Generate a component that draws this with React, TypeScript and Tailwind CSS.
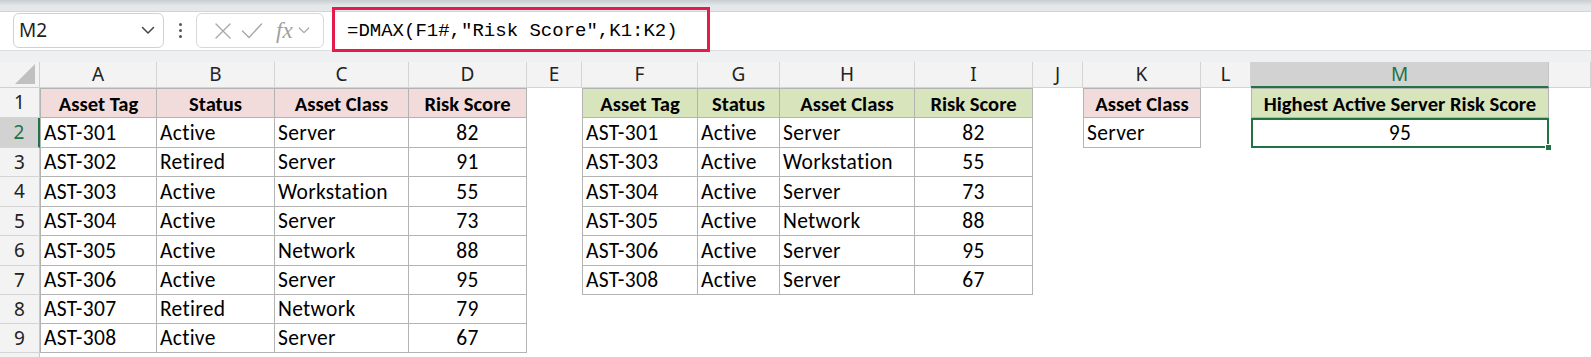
import React from "react";

const COLS = [
  { k: "A", w: 117 },
  { k: "B", w: 118 },
  { k: "C", w: 134 },
  { k: "D", w: 118 },
  { k: "E", w: 55 },
  { k: "F", w: 116 },
  { k: "G", w: 82 },
  { k: "H", w: 135 },
  { k: "I", w: 118 },
  { k: "J", w: 50 },
  { k: "K", w: 118 },
  { k: "L", w: 50 },
  { k: "M", w: 298 },
  { k: "", w: 42 },
];

const ROW_H = [30, 30, 29, 30, 29, 30, 29, 29, 29, 29];

type Cell = { t: string; kind: "pink" | "green" | "body" | "num" | "sel" } | null;

const P = (t: string): Cell => ({ t, kind: "pink" });
const G = (t: string): Cell => ({ t, kind: "green" });
const B = (t: string): Cell => ({ t, kind: "body" });
const N = (t: string): Cell => ({ t, kind: "num" });

const left: Cell[][] = [
  [P("Asset Tag"), P("Status"), P("Asset Class"), P("Risk Score")],
  [B("AST-301"), B("Active"), B("Server"), N("82")],
  [B("AST-302"), B("Retired"), B("Server"), N("91")],
  [B("AST-303"), B("Active"), B("Workstation"), N("55")],
  [B("AST-304"), B("Active"), B("Server"), N("73")],
  [B("AST-305"), B("Active"), B("Network"), N("88")],
  [B("AST-306"), B("Active"), B("Server"), N("95")],
  [B("AST-307"), B("Retired"), B("Network"), N("79")],
  [B("AST-308"), B("Active"), B("Server"), N("67")],
];

const mid: Cell[][] = [
  [G("Asset Tag"), G("Status"), G("Asset Class"), G("Risk Score")],
  [B("AST-301"), B("Active"), B("Server"), N("82")],
  [B("AST-303"), B("Active"), B("Workstation"), N("55")],
  [B("AST-304"), B("Active"), B("Server"), N("73")],
  [B("AST-305"), B("Active"), B("Network"), N("88")],
  [B("AST-306"), B("Active"), B("Server"), N("95")],
  [B("AST-308"), B("Active"), B("Server"), N("67")],
];

function buildGrid(): { cell: Cell; top: boolean; leftEdge: boolean }[][] {
  const rows: { cell: Cell; top: boolean; leftEdge: boolean }[][] = [];
  for (let r = 0; r < 10; r++) {
    const row: { cell: Cell; top: boolean; leftEdge: boolean }[] = [];
    for (let c = 0; c < 14; c++) {
      let cell: Cell = null;
      let leftEdge = false;
      if (c <= 3 && r < left.length) {
        cell = left[r][c];
        leftEdge = c === 0;
      } else if (c >= 5 && c <= 8 && r < mid.length) {
        cell = mid[r][c - 5];
        leftEdge = c === 5;
      } else if (c === 10 && r < 2) {
        cell = r === 0 ? P("Asset Class") : B("Server");
        leftEdge = true;
      } else if (c === 12 && r < 2) {
        cell = r === 0 ? G("Highest Active Server Risk Score") : { t: "95", kind: "sel" };
        leftEdge = true;
      }
      row.push({ cell, top: r === 0, leftEdge });
    }
    rows.push(row);
  }
  return rows;
}

const font = { fontFamily: "Carlito, Calibri, Lato, sans-serif" };

function CellView({ cell, top, leftEdge }: { cell: Cell; top: boolean; leftEdge: boolean }) {
  if (!cell) return <div className="bg-white" />;
  if (cell.kind === "sel") {
    return (
      <div className="relative bg-white border-2 border-[#217346] flex items-center justify-center text-[21.5px] tracking-[0.3px] text-black leading-none">
        <span className="pt-[2px]">{cell.t}</span>
        <div className="absolute right-[-5px] bottom-[-5px] w-[7px] h-[7px] bg-[#217346] border border-white" />
      </div>
    );
  }
  const borders = `border-r border-b border-[#b3b3b3] ${top ? "border-t" : ""} ${leftEdge ? "border-l" : ""}`;
  if (cell.kind === "pink" || cell.kind === "green") {
    return (
      <div
        className={`${borders} ${cell.kind === "pink" ? "bg-[#f2dcdb]" : "bg-[#d8e4bc]"} flex items-center justify-center text-[20.6px] font-bold text-black leading-none whitespace-nowrap`}
      >
        <span className="pt-[2px]">{cell.t}</span>
      </div>
    );
  }
  if (cell.kind === "num") {
    return (
      <div className={`${borders} bg-white flex items-center justify-center text-[21.5px] tracking-[0.3px] text-black leading-none`}>
        <span className="pt-[2px]">{cell.t}</span>
      </div>
    );
  }
  return (
    <div className={`${borders} bg-white flex items-center pl-[3px] text-[21.5px] tracking-[0.3px] text-black leading-none whitespace-nowrap`}>
      <span className="pt-[2px]">{cell.t}</span>
    </div>
  );
}

function Chevron({ className }: { className?: string }) {
  return (
    <svg className={className} width="14" height="9" viewBox="0 0 14 9" fill="none">
      <path d="M1.5 1.5 L7 7 L12.5 1.5" stroke="currentColor" strokeWidth="1.5" strokeLinecap="round" strokeLinejoin="round" />
    </svg>
  );
}

export default function App() {
  const grid = buildGrid();
  const tmpl = `40px ${COLS.map((c) => c.w + "px").join(" ")}`;
  return (
    <div className="w-[1591px] h-[357px] overflow-hidden bg-white relative" style={{ fontFamily: "Lato, sans-serif" }}>
      {/* top strip */}
      <div className="h-[12px] bg-gradient-to-b from-[#c9ccd0] via-[#e4e7ea] to-[#e6e8eb] border-b border-[#d2d4d6]" />
      {/* formula row */}
      <div className="h-[38px] bg-white flex items-start">
        <div className="ml-[13px] mt-[1px] w-[151px] h-[35px] rounded-[6px] border border-[#d1d1d1] bg-white flex items-center justify-between pl-[5px] pr-[8px]">
          <span className="text-[19px] text-[#1f1f1f]" style={{ fontFamily: "'Noto Sans', sans-serif" }}>
            M2
          </span>
          <Chevron className="text-[#444]" />
        </div>
        <div className="w-[32px] h-[36px] flex flex-col items-center justify-center gap-[3px]">
          <div className="w-[3px] h-[3px] rounded-full bg-[#555]" />
          <div className="w-[3px] h-[3px] rounded-full bg-[#555]" />
          <div className="w-[3px] h-[3px] rounded-full bg-[#555]" />
        </div>
        <div className="mt-[1px] w-[128px] h-[35px] rounded-[6px] border border-[#d8d8d8] bg-white flex items-center pl-[17px]">
          <svg width="18" height="18" viewBox="0 0 18 18" fill="none">
            <path d="M2 2 L16 16 M16 2 L2 16" stroke="#a8a8a8" strokeWidth="1.4" strokeLinecap="round" />
          </svg>
          <svg className="ml-[9px]" width="22" height="18" viewBox="0 0 22 18" fill="none">
            <path d="M1.5 9 L8 15.5 L20.5 2" stroke="#a8a8a8" strokeWidth="1.4" strokeLinecap="round" strokeLinejoin="round" />
          </svg>
          <span
            className="ml-[13px] text-[23px] italic text-[#a0a0a0] leading-none"
            style={{ fontFamily: "'Liberation Serif', serif" }}
          >
            fx
          </span>
          <Chevron className="ml-[5px] text-[#a8a8a8] w-[12px]" />
        </div>
        <div className="ml-[8px] w-[1px] h-[38px] bg-[#e0e0e0]" />
        <div className="flex-1 h-[38px] flex items-center pl-[14px]">
          <span className="text-[19px] text-black whitespace-pre" style={{ fontFamily: "'Liberation Mono', monospace" }}>
            =DMAX(F1#,"Risk Score",K1:K2)
          </span>
        </div>
      </div>
      {/* band */}
      <div className="h-[12px] bg-[#eef0f2] border-t border-[#dedede]" />
      {/* red annotation */}
      <div className="absolute left-[332px] top-[7px] w-[378px] h-[45px] border-[3px] border-[#e31c4b]" />
      {/* sheet */}
      <div className="grid" style={{ gridTemplateColumns: tmpl, ...font }}>
        {/* column header row */}
        <div className="h-[26px] bg-[#f3f3f3] border-r border-b border-[#d0d0d0] relative">
          <svg className="absolute right-[4px] bottom-[3px]" width="20" height="20" viewBox="0 0 20 20">
            <path d="M20 0 L20 20 L0 20 Z" fill="#c0c0c0" />
          </svg>
        </div>
        {COLS.map((c, i) =>
          c.k === "M" ? (
            <div
              key={i}
              className="h-[26px] bg-[#d2d2d2] border-r border-[#c6c6c6] border-b-2 border-b-[#217346] flex items-center justify-center text-[19px] text-[#217346] leading-none"
              style={{ fontFamily: "'Noto Sans', sans-serif" }}
            >
              {c.k}
            </div>
          ) : (
            <div
              key={i}
              className="h-[26px] bg-[#f3f3f3] border-r border-b border-[#d4d4d4] flex items-center justify-center text-[19px] text-[#222] leading-none"
              style={{ fontFamily: "'Noto Sans', sans-serif" }}
            >
              {c.k}
            </div>
          )
        )}
        {grid.map((row, r) => (
          <React.Fragment key={r}>
            <div
              className={`${
                r === 1
                  ? "bg-[#d2d2d2] text-[#217346] border-r-2 border-r-[#217346]"
                  : "bg-[#f3f3f3] text-[#222] border-r border-r-[#c8c8c8]"
              } border-b border-b-[#d4d4d4] flex items-center justify-center text-[19px] leading-none`}
              style={{ height: ROW_H[r], fontFamily: "'Noto Sans', sans-serif" }}
            >
              {r < 9 ? r + 1 : ""}
            </div>
            {row.map((c, ci) => (
              <CellView key={ci} cell={c.cell} top={c.top} leftEdge={c.leftEdge} />
            ))}
          </React.Fragment>
        ))}
      </div>
    </div>
  );
}
